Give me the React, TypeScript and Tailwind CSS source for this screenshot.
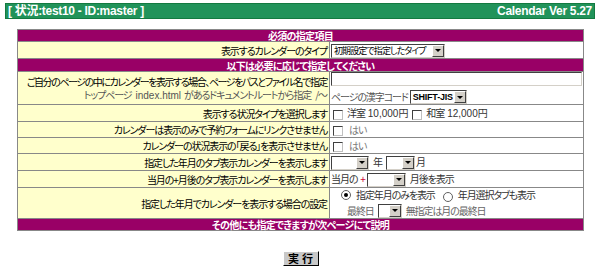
const jp = "font-['Noto_Sans_CJK_JP','Noto_Sans',sans-serif] [font-feature-settings:'palt']";

const Select = ({ w, text = "", latin }: { w: number; text?: string; latin?: boolean }) => (
  <span
    className="inline-flex h-[14px] items-stretch bg-white border-t border-l border-[#404040] border-b border-r border-b-[#d4d0c8] border-r-[#d4d0c8] align-middle tracking-normal"
    style={{ width: w }}
  >
    {latin ? (
      <span className="flex-1 pl-[2px] font-['Liberation_Sans',sans-serif] font-bold text-[9px] leading-[12px] tracking-[-0.2px] text-black whitespace-nowrap overflow-hidden">
        {text}
      </span>
    ) : (
      <span className="flex-1 pl-[2px] text-[9px] leading-[12px] tracking-[-0.9px] text-black whitespace-nowrap overflow-hidden">
        {text}
      </span>
    )}
    <span className="w-[12px] bg-[#d4d0c8] border-t border-l border-white border-b border-r border-b-[#404040] border-r-[#404040] flex items-center justify-center">
      <span className="w-0 h-0 border-l-[3px] border-r-[3px] border-t-[3px] border-l-transparent border-r-transparent border-t-black" />
    </span>
  </span>
);

const Check = () => (
  <span className="inline-block w-[10px] h-[10px] bg-white border-t border-l border-[#404040] border-b border-r border-b-[#c0c0c0] border-r-[#c0c0c0] align-middle mr-[4px]" />
);

const Radio = ({ on }: { on?: boolean }) => (
  <span className="inline-flex w-[10px] h-[10px] rounded-full bg-white border border-[#606060] items-center justify-center align-middle mr-[5px]">
    {on && <span className="w-[4px] h-[4px] rounded-full bg-black" />}
  </span>
);

const Latin = ({ children }: { children: React.ReactNode }) => (
  <span className="font-['Liberation_Sans',sans-serif] tracking-normal">{children}</span>
);

const Head = ({ children, h }: { children: React.ReactNode; h: string }) => (
  <tr className={h}>
    <td
      colSpan={2}
      className="bg-[#990066] text-white font-bold text-center text-[10px] leading-[11px] tracking-[-0.7px] p-0 border border-[#888]"
    >
      {children}
    </td>
  </tr>
);

const Row = ({
  label,
  children,
  h,
}: {
  label: React.ReactNode;
  children: React.ReactNode;
  h: string;
}) => (
  <tr className={h}>
    <td className="bg-[#ffffcc] text-right text-[10px] leading-[13px] tracking-[-1.1px] text-black px-[2px] py-0 border border-[#888] whitespace-nowrap overflow-hidden">
      {label}
    </td>
    <td className="bg-white text-left text-[10px] leading-[13px] tracking-[-1.1px] text-[#333] px-[1px] py-0 border border-[#888] whitespace-nowrap">
      {children}
    </td>
  </tr>
);

export default function App() {
  return (
    <div className={`w-[600px] h-[273px] bg-white overflow-hidden ${jp}`}>
      <div className="mx-[5px] mt-[3px] h-[16px] bg-[#21935a] border border-[#137a40] flex items-center justify-between px-[2px] text-white font-bold text-[12px] leading-[14px]">
        <span className="font-['Liberation_Sans','Noto_Sans_CJK_JP',sans-serif] tracking-[-0.3px]">
          [ 状況:test10 - ID:master ]
        </span>
        <span className="font-['Liberation_Sans',sans-serif] tracking-[-0.3px]">Calendar Ver 5.27</span>
      </div>

      <table className="ml-[17px] mt-[10px] w-[566px] table-fixed border-collapse border border-[#888]">
        <colgroup>
          <col className="w-[312px]" />
          <col className="w-[254px]" />
        </colgroup>
        <tbody>
          <Head h="h-[12px]">必須の指定項目</Head>
          <Row h="h-[17px]" label="表示するカレンダーのタイプ">
            <Select w={114} text="初期設定で指定したタイプ" />
          </Row>
          <Head h="h-[13px]">以下は必要に応じて指定してください</Head>
          <Row
            h="h-[33px]"
            label={
              <>
                <div className="tracking-[-1.45px]">
                  ご自分のページの中にカレンダーを表示する場合、ページをパスとファイル名で指定
                </div>
                <div className="text-[#555]">
                  トップページ<span className="ml-[4px] mr-[3px]"><Latin>index.html</Latin></span>があるドキュメントルートから指定<span className="ml-[4px]">/～</span>
                </div>
              </>
            }
          >
            <div className="h-[14px] w-[251px] bg-white border-t border-l border-[#404040] border-b border-r border-b-[#d4d0c8] border-r-[#d4d0c8]" />
            <div className="mt-[3px] flex items-center text-[#555]">
              ページの漢字コード
              <span className="ml-[2px]"><Select w={57} text="SHIFT-JIS" latin /></span>
            </div>
          </Row>
          <Row h="h-[17px]" label="表示する状況タイプを選択します">
            <span className="pl-[2px]">
              <Check />洋室<span className="ml-[3px]"><Latin>10,000</Latin></span>円<span className="ml-[5px]"><Check /></span>和室<span className="ml-[3px]"><Latin>12,000</Latin></span>円
            </span>
          </Row>
          <Row h="h-[16px]" label="カレンダーは表示のみで予約フォームにリンクさせません">
            <span className="pl-[2px] text-[#777]">
              <Check />
              <span className="ml-[2px]">はい</span>
            </span>
          </Row>
          <Row h="h-[16px]" label="カレンダーの状況表示の「戻る」を表示させません">
            <span className="pl-[2px] text-[#777]">
              <Check />
              <span className="ml-[2px]">はい</span>
            </span>
          </Row>
          <Row h="h-[17px]" label="指定した年月のタブ表示カレンダーを表示します">
            <Select w={38} />
            <span className="mx-[4px]">年</span>
            <Select w={29} />
            <span className="ml-[1px]">月</span>
          </Row>
          <Row h="h-[17px]" label="当月の+月後のタブ表示カレンダーを表示します">
            当月の<span className="ml-[3px] mr-[2px] text-[#cc0033]">+</span>
            <Select w={39} />
            <span className="ml-[4px]">月後を表示</span>
          </Row>
          <Row h="h-[30px]" label="指定した年月でカレンダーを表示する場合の設定">
            <div className="pl-[10px] flex items-center">
              <Radio on />指定年月のみを表示
              <span className="ml-[8px]"><Radio /></span>年月選択タブも表示
            </div>
            <div className="pl-[16px] mt-[1px] flex items-center text-[#666]">
              最終日<span className="mx-[4px]"><Select w={24} /></span>無指定は月の最終日
            </div>
          </Row>
          <Head h="h-[12px]">その他にも指定できますが次ページにて説明</Head>
        </tbody>
      </table>

      <div className="mt-[20px] flex justify-center">
        <button className="ml-[1px] w-[36px] h-[15px] bg-[#c8c8c8] border-t border-l border-white border-b border-r border-b-black border-r-black text-[11px] leading-[11px] font-bold text-black tracking-[3px] pl-[3px]">
          実行
        </button>
      </div>
    </div>
  );
}
